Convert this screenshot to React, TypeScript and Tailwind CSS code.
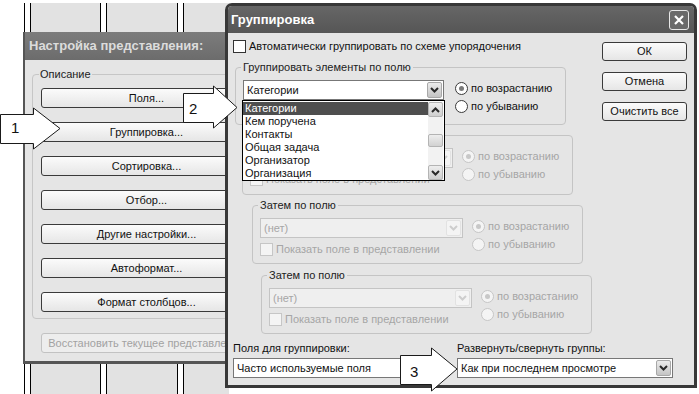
import React from "react";

const font = "font-['Liberation_Sans',Arial,sans-serif]";

function Chevron({ up, color }: { up?: boolean; color: string }) {
  return (
    <svg width="9" height="6" viewBox="0 0 9 6" className="block">
      <path
        d={up ? "M1 5 L4.5 1.5 L8 5" : "M1 1 L4.5 4.5 L8 1"}
        fill="none"
        stroke={color}
        strokeWidth="2"
      />
    </svg>
  );
}

function ComboButton({ disabled }: { disabled?: boolean }) {
  return (
    <span
      className={`flex items-center justify-center w-[15px] h-[16px] mr-[1px] rounded-[2px] border ${
        disabled
          ? "border-[#e2e2e2] bg-[#f4f4f4]"
          : "border-[#a8a8a8] bg-gradient-to-b from-[#ececec] to-[#c4c4c4]"
      }`}
    >
      <Chevron color={disabled ? "#cdcdcd" : "#2a2a2a"} />
    </span>
  );
}

function Select({
  value,
  disabled,
  hidden,
  className,
  children,
}: {
  value: string;
  disabled?: boolean;
  hidden?: boolean;
  className: string;
  children?: React.ReactNode;
}) {
  return (
    <div
      className={`relative flex items-center h-[20px] border ${
        disabled ? "border-[#c4c4c4] bg-[#efefef] text-[#a6a6a6]" : "border-[#777] bg-white text-[#111]"
      } ${className}`}
    >
      <span className={`flex-1 pl-[3px] whitespace-nowrap overflow-hidden ${hidden ? "invisible" : ""}`}>{value}</span>
      <ComboButton disabled={disabled} />
      {children}
    </div>
  );
}

function Check({ disabled }: { disabled?: boolean }) {
  return (
    <span
      className={`block w-[13px] h-[13px] border ${
        disabled ? "border-[#c6c6c6] bg-[#f4f4f4]" : "border-[#333] bg-white"
      }`}
    />
  );
}

function Radio({ label, checked, disabled }: { label: string; checked?: boolean; disabled?: boolean }) {
  return (
    <div className="flex items-center h-[18px] gap-[3px]">
      <span
        className={`flex items-center justify-center w-[13px] h-[13px] rounded-full border ${
          disabled ? "border-[#c6c6c6] bg-[#f4f4f4]" : "border-[#3a3a3a] bg-white"
        }`}
      >
        {checked && (
          <span className={`w-[5px] h-[5px] rounded-full ${disabled ? "bg-[#c8c8c8]" : "bg-[#7a7a7a]"}`} />
        )}
      </span>
      <span className={disabled ? "text-[#a6a6a6]" : "text-[#111]"}>{label}</span>
    </div>
  );
}

function Button({ label, className }: { label: string; className: string }) {
  return (
    <div
      className={`flex items-center justify-center rounded-[3px] border border-[#3a3a3a] bg-gradient-to-b from-[#fbfbfb] to-[#e6e6e6] text-[#111] whitespace-nowrap ${className}`}
    >
      {label}
    </div>
  );
}

const listItems = ["Категории", "Кем поручена", "Контакты", "Общая задача", "Организатор", "Организация"];

function DropList() {
  return (
    <div className="absolute left-[-2px] top-[19px] z-20 w-[203px] h-[81px] border border-black bg-white pt-[1px] pr-[1px] flex">
      <div className="flex-1 flex flex-col">
        {listItems.map((item, i) => (
          <div
            key={item}
            className={`h-[13px] leading-[13px] pl-[2px] ${i === 0 ? "bg-[#4e4e4e] text-white" : "text-[#111]"}`}
          >
            {item}
          </div>
        ))}
      </div>
      <div className="w-[15px] flex flex-col bg-[#f2f2f2]">
        <span className="flex items-center justify-center h-[15px] rounded-[2px] border border-[#b4b4b4] bg-gradient-to-b from-[#eeeeee] to-[#cfcfcf]">
          <Chevron up color="#2a2a2a" />
        </span>
        <span className="mt-[17px] h-[13px] rounded-[2px] border border-[#b4b4b4] bg-gradient-to-b from-[#eeeeee] to-[#d2d2d2]" />
        <span className="mt-auto flex items-center justify-center h-[15px] rounded-[2px] border border-[#b4b4b4] bg-gradient-to-b from-[#eeeeee] to-[#cfcfcf]">
          <Chevron color="#2a2a2a" />
        </span>
      </div>
    </div>
  );
}

function Group({
  label,
  className,
  enabled,
  showCheck,
  withList,
  covered,
}: {
  label: string;
  className: string;
  enabled?: boolean;
  showCheck?: boolean;
  withList?: boolean;
  covered?: boolean;
}) {
  return (
    <fieldset className={`w-[331px] border border-[#c4c4c4] rounded-[4px] ${className}`}>
      <legend className="ml-[5px] px-[2px] leading-[12px] text-[#222]">
        <span className={covered ? "invisible" : ""}>{label}</span>
      </legend>
      <div className="flex pt-[6px] pl-[7px]">
        <div className="flex flex-col">
          <Select
            value={enabled ? "Категории" : "(нет)"}
            disabled={!enabled}
            hidden={covered}
            className={`mt-[1px] ${enabled ? "w-[201px]" : "w-[203px]"}`}
          >
            {withList && <DropList />}
          </Select>
          {showCheck && (
            <div className="mt-[5px] flex items-center gap-[3px]">
              <Check disabled />
              <span className="text-[#a6a6a6] leading-[13px]">Показать поле в представлении</span>
            </div>
          )}
        </div>
        <div className={`flex flex-col ${enabled ? "ml-[11px]" : "ml-[9px]"}`}>
          <Radio label="по возрастанию" checked disabled={!enabled} />
          <Radio label="по убыванию" disabled={!enabled} />
        </div>
      </div>
    </fieldset>
  );
}

function Backdrop() {
  const sep = <div className="w-[7px] h-full border-x border-black bg-white" />;
  return (
    <div className="absolute left-[24px] top-[3px] w-[205px] h-[391px] bg-[#e2e2e2] flex">
      {sep}
      <div className="w-[69px]" />
      {sep}
      <div className="w-[70px]" />
      {sep}
      <div className="flex-1" />
    </div>
  );
}

function Callout({
  n,
  className,
  w,
  h,
  points,
  numClass,
}: {
  n: string;
  className: string;
  w: number;
  h: number;
  points: string;
  numClass: string;
}) {
  return (
    <div className={`absolute z-30 ${className}`}>
      <svg width={w} height={h} className="block">
        <polygon points={points} fill="white" stroke="#1a1a1a" strokeWidth="1" />
      </svg>
      <span className={`absolute text-[15px] leading-[15px] text-[#111] ${numClass}`}>{n}</span>
    </div>
  );
}

export default function App() {
  return (
    <div className={`relative w-[699px] h-[394px] bg-white overflow-hidden text-[11px] ${font}`}>
      <Backdrop />

      {/* Настройка представления */}
      <div className="absolute left-[23px] top-[32px] w-[252px] h-[332px] flex flex-col bg-[#e5e5e5] border-l-[2px] border-b-[3px] border-[#555]">
        <div className="h-[28px] flex items-center pl-[4px] bg-gradient-to-b from-[#7c7c7c] to-[#6c6c6c] text-[13px] font-bold text-[#dcdcdc]">
          Настройка представления:
        </div>
        <div className="flex-1 pl-[7px] pt-[8px]">
          <fieldset className="w-[240px] h-[251px] border border-[#c6c6c6] rounded-[4px]">
            <legend className="ml-[6px] px-[1px] leading-[12px] text-[#222]">Описание</legend>
            <div className="flex flex-col gap-[14px] pl-[8px] pt-[8px]">
              {["Поля...", "Группировка...", "Сортировка...", "Отбор...", "Другие настройки...", "Автоформат...", "Формат столбцов..."].map(
                (b) => (
                  <Button key={b} label={b} className="w-[211px] h-[20px]" />
                )
              )}
            </div>
          </fieldset>
          <div className="mt-[14px] ml-[9px] w-[211px] h-[20px] flex items-center justify-center rounded-[3px] border border-[#c2c2c2] bg-[#ededed] text-[#a2a2a2] whitespace-nowrap">
            Восстановить текущее представление
          </div>
        </div>
      </div>

      {/* Группировка */}
      <div className="absolute left-[225px] top-[3px] z-10 w-[472px] h-[385px] flex flex-col border-[3px] border-[#383838] rounded-t-[7px] bg-[#e5e5e5]">
        <div className="h-[27px] flex items-center justify-between pl-[3px] pr-[5px] bg-gradient-to-b from-[#666] to-[#565656] rounded-t-[4px]">
          <span className="text-[13px] font-bold text-white">Группировка</span>
          <span className="flex items-center justify-center w-[20px] h-[20px] rounded-[3px] border border-[#e8e8e8] bg-[#6a6a6a]">
            <svg width="12" height="12" viewBox="0 0 12 12">
              <path d="M2 2 L10 10 M10 2 L2 10" stroke="white" strokeWidth="2.2" />
            </svg>
          </span>
        </div>

        <div className="flex-1 flex flex-col pl-[5px] pt-[7px]">
          <div className="flex">
            <div className="w-[360px] flex flex-col">
              <div className="h-[13px] flex items-center gap-[3px]">
                <Check />
                <span className="text-[#111] whitespace-nowrap">Автоматически группировать по схеме упорядочения</span>
              </div>
              <Group
                label="Группировать элементы по полю"
                className="mt-[8px] ml-[2px] h-[64px] relative z-20"
                enabled
                withList
              />
              <Group label="Затем по полю" className="mt-[4px] ml-[9px] h-[66px]" showCheck covered />
              <Group label="Затем по полю" className="mt-[4px] ml-[19px] h-[65px]" showCheck />
              <Group label="Затем по полю" className="mt-[5px] ml-[28px] h-[65px]" showCheck />
            </div>
            <div className="ml-[9px] pt-[2px] flex flex-col gap-[11px]">
              <Button label="ОК" className="w-[85px] h-[19px]" />
              <Button label="Отмена" className="w-[85px] h-[19px]" />
              <Button label="Очистить все" className="w-[85px] h-[19px]" />
            </div>
          </div>

          <div className="mt-[8px] flex gap-[12px] text-[#111]">
            <div className="w-[212px] flex flex-col gap-[4px]">
              <span className="leading-[12px]">Поля для группировки:</span>
              <div className="h-[20px] flex items-center border border-[#777] bg-white pl-[3px]">Часто используемые поля</div>
            </div>
            <div className="w-[216px] flex flex-col gap-[4px]">
              <span className="leading-[12px]">Развернуть/свернуть группы:</span>
              <Select value="Как при последнем просмотре" className="w-[216px]" />
            </div>
          </div>
        </div>
      </div>

      <Callout
        n="1"
        className="left-0 top-[107px]"
        w={62}
        h={43}
        points="0.5,7.5 33.5,7.5 33.5,1 60,21.5 33.5,42 33.5,36.5 0.5,36.5"
        numClass="left-[11px] top-[13px]"
      />
      <Callout
        n="2"
        className="left-[182px] top-[85px]"
        w={57}
        h={45}
        points="1.5,8.5 31.5,8.5 31.5,1 55,22.5 31.5,43 31.5,37.5 1.5,37.5"
        numClass="left-[7px] top-[16px]"
      />
      <Callout
        n="3"
        className="left-[399px] top-[347px]"
        w={60}
        h={47}
        points="1.5,8.5 32.5,8.5 32.5,1 58,22 32.5,44 32.5,37.5 1.5,37.5"
        numClass="left-[11px] top-[17px]"
      />
    </div>
  );
}
